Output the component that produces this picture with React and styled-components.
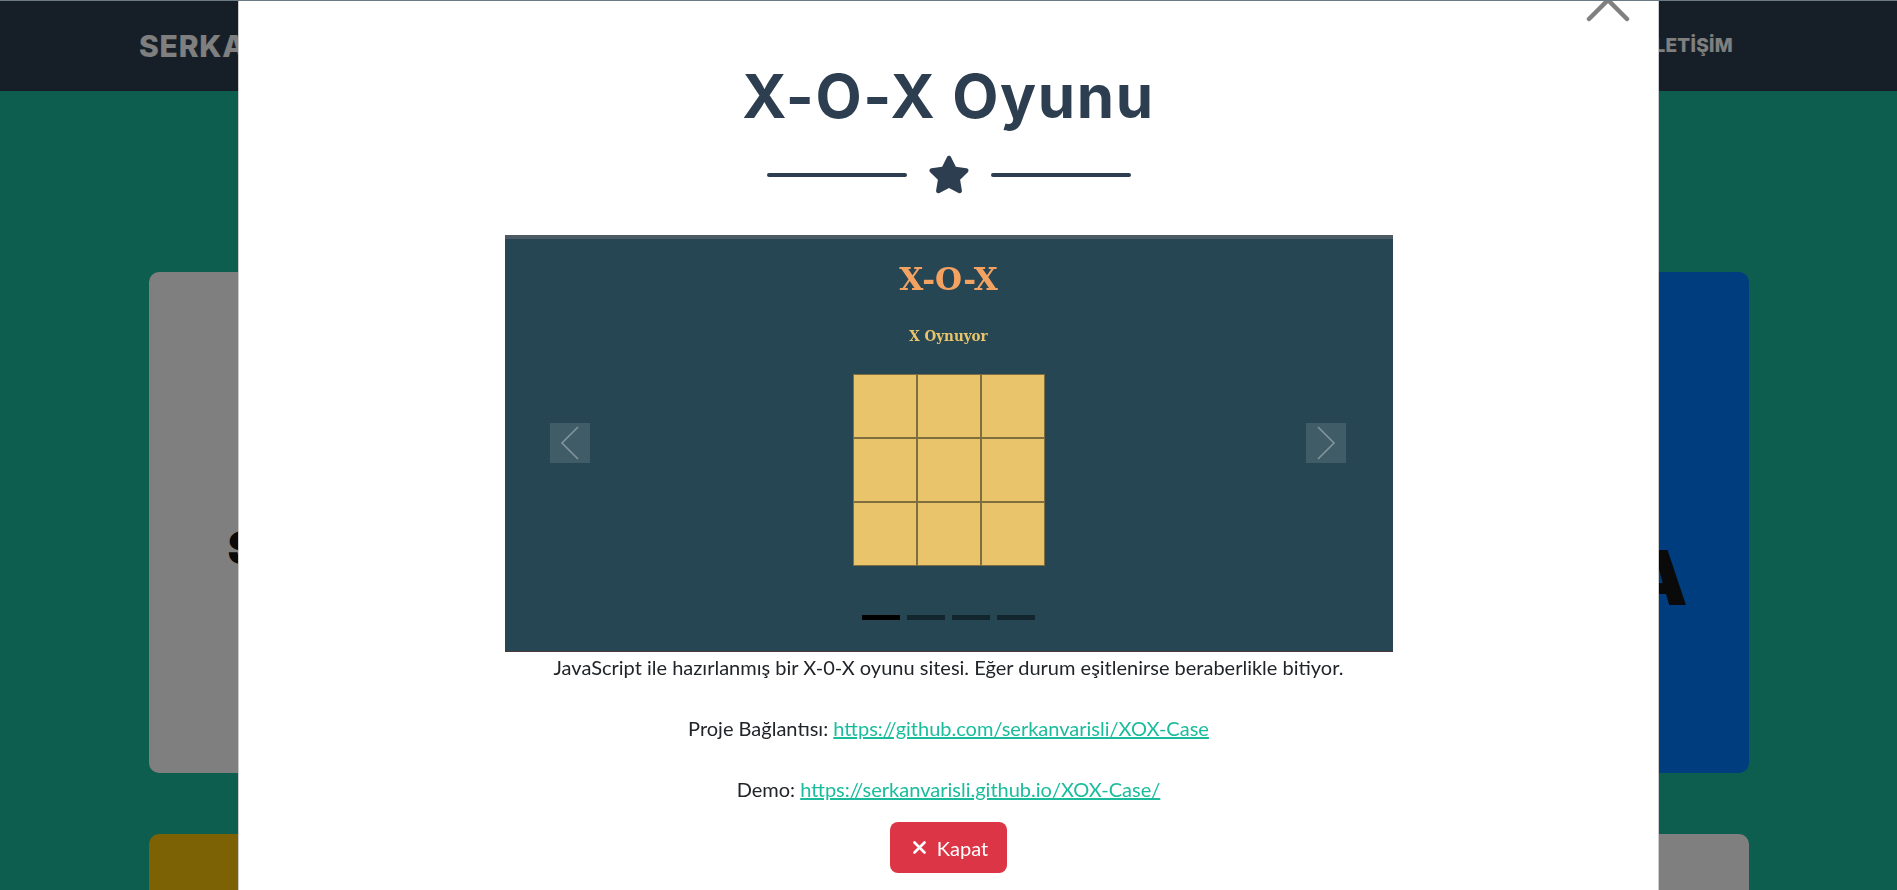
import styled, { createGlobalStyle } from 'styled-components'
import { FaStar } from 'react-icons/fa'

const GlobalStyle = createGlobalStyle`
  html, body {
    margin: 0;
    padding: 0;
    overflow: hidden;
  }
  body {
    font-family: Lato, "Open Sans", sans-serif;
    color: #212529;
  }
  * { box-sizing: border-box; }
`

const cards = [
  { color: '#ffffff', label: 'SERKAN', size: 46, align: 'flex-start', pad: '48px 0 0 79px' },
  { color: '#e74c3c', label: '', size: 40, align: 'center', pad: '0' },
  { color: '#007bff', label: 'KAMPANYA', size: 75, align: 'flex-end', pad: '110px 61px 0 0' },
  { color: '#f8c40a', label: '', size: 40, align: 'center', pad: '0' },
  { color: '#9b59b6', label: '', size: 40, align: 'center', pad: '0' },
  { color: '#ffffff', label: '', size: 40, align: 'center', pad: '0' },
]

function App() {
  return (
    <>
      <GlobalStyle />
      <Page>
        <Navbar>
          <Brand>SERKAN VARIŞLI</Brand>
          <NavList>
            <NavLink>PORTFOLYO</NavLink>
            <NavLink>HAKKIMDA</NavLink>
            <NavLink>İLETİŞİM</NavLink>
          </NavList>
        </Navbar>
        <Portfolio>
          <CardGrid>
            {cards.map((c, idx) => (
              <Card key={idx} $bg={c.color} $align={c.align} $pad={c.pad}>
                <CardLabel $size={c.size}>{c.label}</CardLabel>
              </Card>
            ))}
          </CardGrid>
        </Portfolio>
      </Page>

      <Backdrop />

      <ModalLayer>
        <Dialog>
          <CloseButton aria-label="close">
            <svg width="44" height="44" viewBox="0 0 44 44">
              <path d="M3 3 L41 41 M41 3 L3 41" stroke="#808080" strokeWidth="4.5" strokeLinecap="round" fill="none" />
            </svg>
          </CloseButton>

          <ModalTitle>X-O-X Oyunu</ModalTitle>

          <Divider>
            <DividerLine />
            <StarIcon />
            <DividerLine />
          </Divider>

          <Carousel>
            <Shot>
              <GameTitle>X-O-X</GameTitle>
              <GameTurn>X Oynuyor</GameTurn>
              <Board>
                {Array.from({ length: 9 }).map((_, i) => <Cell key={i} />)}
              </Board>
            </Shot>
            <ArrowBox $side="left">
              <svg width="20" height="34" viewBox="0 0 20 34">
                <path d="M18 1 L2 17 L18 33" stroke="rgba(255,255,255,0.35)" strokeWidth="1.6" fill="none" />
              </svg>
            </ArrowBox>
            <ArrowBox $side="right">
              <svg width="20" height="34" viewBox="0 0 20 34">
                <path d="M2 1 L18 17 L2 33" stroke="rgba(255,255,255,0.35)" strokeWidth="1.6" fill="none" />
              </svg>
            </ArrowBox>
            <Indicators>
              <Dot $active />
              <Dot />
              <Dot />
              <Dot />
            </Indicators>
          </Carousel>

          <Para>JavaScript ile hazırlanmış bir X-0-X oyunu sitesi. Eğer durum eşitlenirse beraberlikle bitiyor.</Para>
          <Para>Proje Bağlantısı: <Link href="#">https://github.com/serkanvarisli/XOX-Case</Link></Para>
          <Para>Demo: <Link href="#">https://serkanvarisli.github.io/XOX-Case/</Link></Para>

          <CloseAction>
            <svg width="13" height="13" viewBox="0 0 13 13">
              <path d="M1.5 1.5 L11.5 11.5 M11.5 1.5 L1.5 11.5" stroke="#ffffff" strokeWidth="2.6" strokeLinecap="round" fill="none" />
            </svg>
            Kapat
          </CloseAction>
        </Dialog>
      </ModalLayer>

      <TopEdge />
    </>
  )
}

export default App

const Page = styled.div`
  min-height: 100vh;
  background: #1abc9c;
`

const Navbar = styled.nav`
  height: 91px;
  background: #2c3e50;
  display: flex;
  align-items: center;
  justify-content: space-between;
  padding: 0 164px 0 139px;
`

const Brand = styled.div`
  font-family: Inter, "Noto Sans", sans-serif;
  font-weight: 800;
  font-size: 30px;
  color: #ffffff;
  letter-spacing: 0.8px;
`

const NavList = styled.div`
  display: flex;
  gap: 40px;
`

const NavLink = styled.span`
  font-family: Inter, "Noto Sans", sans-serif;
  font-weight: 800;
  font-size: 19px;
  color: #ffffff;
  letter-spacing: 0.3px;
`

const Portfolio = styled.section`
  padding-top: 181px;
  display: flex;
  justify-content: center;
`

const CardGrid = styled.div`
  width: 1600px;
  display: grid;
  grid-template-columns: repeat(3, 1fr);
  column-gap: 48px;
  row-gap: 61px;
`

const Card = styled.div`
  height: 501px;
  border-radius: 10px;
  background: ${p => p.$bg};
  display: flex;
  align-items: center;
  justify-content: ${p => p.$align};
  padding: ${p => p.$pad};
`

const CardLabel = styled.div`
  font-family: Inter, "Noto Sans", sans-serif;
  font-weight: 900;
  font-size: ${p => p.$size}px;
  color: #151515;
  line-height: 1;
`

const Backdrop = styled.div`
  position: fixed;
  inset: 0;
  background: rgba(0, 0, 0, 0.5);
`

const ModalLayer = styled.div`
  position: fixed;
  inset: 0;
  overflow: hidden;
`

const Dialog = styled.div`
  position: relative;
  width: 1421px;
  margin: -50px auto 0;
  padding: 109px 0 60px;
  background: #ffffff;
  border: 1px solid rgba(0, 0, 0, 0.2);
  border-radius: 8px;
  display: flex;
  flex-direction: column;
  align-items: center;
  text-align: center;
`

const CloseButton = styled.button`
  position: absolute;
  top: 27px;
  right: 28px;
  width: 44px;
  height: 44px;
  padding: 0;
  border: none;
  background: transparent;
  display: flex;
`

const ModalTitle = styled.h2`
  margin: 0;
  font-family: Inter, "Noto Sans", sans-serif;
  font-weight: 700;
  font-size: 60px;
  line-height: 72px;
  letter-spacing: 1.6px;
  color: #2c3e50;
`

const Divider = styled.div`
  margin-top: 23px;
  height: 39px;
  display: flex;
  align-items: center;
  gap: 21px;
`

const DividerLine = styled.div`
  width: 140px;
  height: 4px;
  border-radius: 4px;
  background: #2c3e50;
`

const StarIcon = styled(FaStar)`
  width: 42px;
  height: 39px;
  color: #2c3e50;
`

const Carousel = styled.div`
  position: relative;
  margin-top: 41px;
  width: 888px;
  height: 417px;
  background: #264653;
  border-top: 4px solid #4b5a63;
  border-bottom: 1px solid #4a3a3e;
  overflow: hidden;
`

const Shot = styled.div`
  display: flex;
  flex-direction: column;
  align-items: center;
  padding-top: 25px;
`

const GameTitle = styled.div`
  font-family: "DejaVu Serif", "Liberation Serif", serif;
  font-weight: 700;
  font-size: 31px;
  line-height: 31px;
  color: #f4a261;
`

const GameTurn = styled.div`
  margin-top: 33px;
  font-family: "DejaVu Serif Condensed", "DejaVu Serif", serif;
  font-weight: 700;
  font-size: 15px;
  line-height: 17px;
  color: #e9c46a;
`

const Board = styled.div`
  margin-top: 29px;
  display: grid;
  grid-template-columns: repeat(3, 64px);
  grid-template-rows: repeat(3, 64px);
`

const Cell = styled.div`
  background: #e9c46a;
  border: 1px solid rgba(40, 40, 30, 0.55);
`

const ArrowBox = styled.div`
  position: absolute;
  top: 184px;
  ${p => (p.$side === 'left' ? 'left: 45px;' : 'right: 47px;')}
  width: 40px;
  height: 40px;
  background: rgba(255, 255, 255, 0.12);
  display: flex;
  align-items: center;
  justify-content: center;
`

const Indicators = styled.div`
  position: absolute;
  left: 0;
  right: 0;
  bottom: 31px;
  display: flex;
  justify-content: center;
  gap: 7px;
`

const Dot = styled.span`
  width: 38px;
  height: 5px;
  background: ${p => (p.$active ? '#000000' : '#13262d')};
`

const Para = styled.p`
  margin: 0 0 31px;
  font-size: 20px;
  line-height: 30px;
  color: #212529;
  &:last-of-type {
    margin-bottom: 18px;
  }
`

const Link = styled.a`
  color: #1abc9c;
  text-decoration: underline;
`

const CloseAction = styled.button`
  display: inline-flex;
  align-items: center;
  gap: 11px;
  height: 51px;
  padding: 0 19px 0 23px;
  border: none;
  border-radius: 8px;
  background: #dc3545;
  color: #ffffff;
  font-family: Lato, sans-serif;
  font-size: 20px;
`

const TopEdge = styled.div`
  position: fixed;
  top: 0;
  left: 0;
  right: 0;
  height: 1px;
  background: #6b7a85;
`
